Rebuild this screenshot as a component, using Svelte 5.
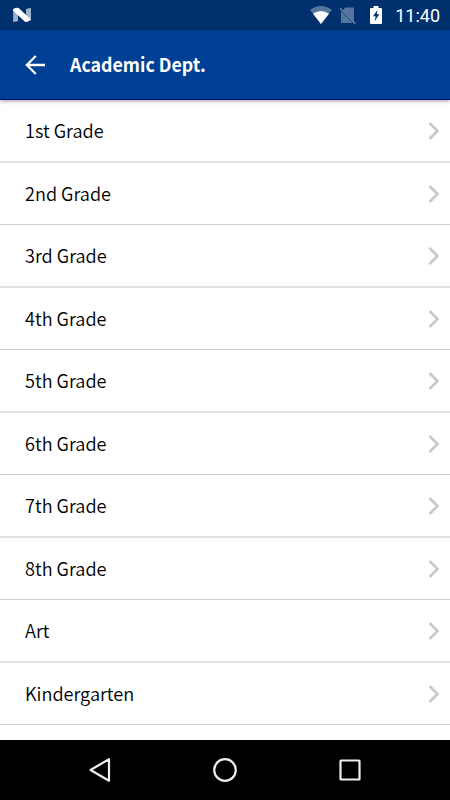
<script>
  const departments = [
    '1st Grade', '2nd Grade', '3rd Grade', '4th Grade', '5th Grade',
    '6th Grade', '7th Grade', '8th Grade', 'Art', 'Kindergarten'
  ];
</script>

<div class="screen">
  <div class="status">
    <svg class="logo" width="20" height="16" viewBox="0 0 20 16">
      <path d="M1.200 2 6 4.500v9.700L1.200 15zM14 2l5-1.200v12.700l-5-1z" fill="#9fb3cb" />
      <path d="M1.200 2.200Q4-.1 7 1.200L18.800 12.600Q16.500 15.300 13 14.800L1.200 3.800z" fill="#fff" />
    </svg>
    <div class="indicators">
      <svg width="22" height="18" viewBox="0 0 22 18">
        <path d="M0 3.800Q11-4 22 3.800L11 18z" fill="#56759c" />
        <path d="M3 7.700Q11 2.300 19 7.700L11 18z" fill="#fff" />
      </svg>
      <svg class="sim" width="18" height="19" viewBox="0 0 18 19">
        <path d="M6.200 1.500H14q1 0 1 1v12.800L4 4.300zM2 5 14 17H3q-1 0-1-1z" fill="#56759c" />
        <path d="m1 2.300 15.500 15.500" stroke="#6f8bad" stroke-width="1.300" />
      </svg>
      <svg class="battery" width="12" height="18" viewBox="0 0 12 18">
        <path d="M1 2h2.500V0h5v2H11q1 0 1 1v14q0 1-1 1H1q-1 0-1-1V3q0-1 1-1z" fill="#fff" />
        <path d="M7.500 4 3 10.300h2.700L4.500 15.500 9.300 8.300H6.800z" fill="#00306d" />
      </svg>
      <span class="clock">11:40</span>
    </div>
  </div>

  <header>
    <svg width="20" height="20" viewBox="0 0 20 20" fill="none" stroke="#fff" stroke-width="2.300">
      <path d="M20 10H2M10.800 1 1.800 10l9 9" />
    </svg>
    <h1>Academic Dept.</h1>
  </header>

  <main>
    {#each departments as name}
      <div class="row">
        <span class="name">{name}</span>
        <svg width="12" height="18" viewBox="0 0 12 18" fill="none" stroke="#c8c8c8" stroke-width="2.600">
          <path d="m1.500 1 8 8-8 8" />
        </svg>
      </div>
    {/each}
  </main>

  <nav>
    <svg width="26" height="26" viewBox="0 0 26 26"><path d="M22 2.200v21.600L3.500 13z" /></svg>
    <svg width="26" height="26" viewBox="0 0 26 26"><circle cx="13" cy="13" r="10.800" /></svg>
    <svg width="26" height="26" viewBox="0 0 26 26"><rect x="3.500" y="3.500" width="19" height="19" rx=".5" /></svg>
  </nav>
</div>

<style>
  :global(body) { margin: 0; }
  .screen {
    width: 450px;
    height: 800px;
    display: flex;
    flex-direction: column;
    overflow: hidden;
    background: #fff;
    color: #000;
    font-family: "Noto Sans CJK SC", "Noto Sans", sans-serif;
  }
  svg { display: block; flex: none; }
  .status {
    height: 30px;
    flex: none;
    box-sizing: border-box;
    padding: 0 10px 0 12px;
    display: flex;
    align-items: center;
    justify-content: space-between;
    background: #00306d;
  }
  .indicators { display: flex; align-items: center; }
  .sim { margin-left: 7px; }
  .battery { margin-left: 13px; }
  .clock {
    margin-left: 13px;
    color: #fff;
    font: 18px/30px Roboto, sans-serif;
    padding-top: 1px;
  }
  header {
    height: 70px;
    flex: none;
    box-sizing: border-box;
    padding-left: 25px;
    display: flex;
    align-items: center;
    gap: 25px;
    background: #004094;
    border-bottom: 1px solid #000d80;
    box-shadow: 0 1px 4px rgba(0, 0, 0, .4);
    z-index: 1;
  }
  h1 {
    margin: 0;
    padding-bottom: 2px;
    color: #fff;
    font-size: 17.800px;
    font-weight: 700;
    line-height: 28px;
    transform: scaleY(1.060);
  }
  main { flex: 1; overflow: hidden; }
  .row {
    height: 62px;
    box-sizing: border-box;
    padding: 0 10px 0 25px;
    display: flex;
    align-items: center;
    justify-content: space-between;
    border-bottom: 1px solid #cecece;
    line-height: 28px;
  }
  .row:nth-child(odd) { height: 63px; border-bottom: 2px solid #e3e3e3; }
  .name {
    padding-bottom: 2px;
    font-size: 18.100px;
    font-weight: 350;
    transform: scaleY(1.040);
  }
  nav {
    height: 60px;
    flex: none;
    display: flex;
    align-items: center;
    justify-content: center;
    gap: 99px;
    background: #000;
  }
  nav svg { fill: none; stroke: #eee; stroke-width: 2.200; stroke-linejoin: round; }
</style>
